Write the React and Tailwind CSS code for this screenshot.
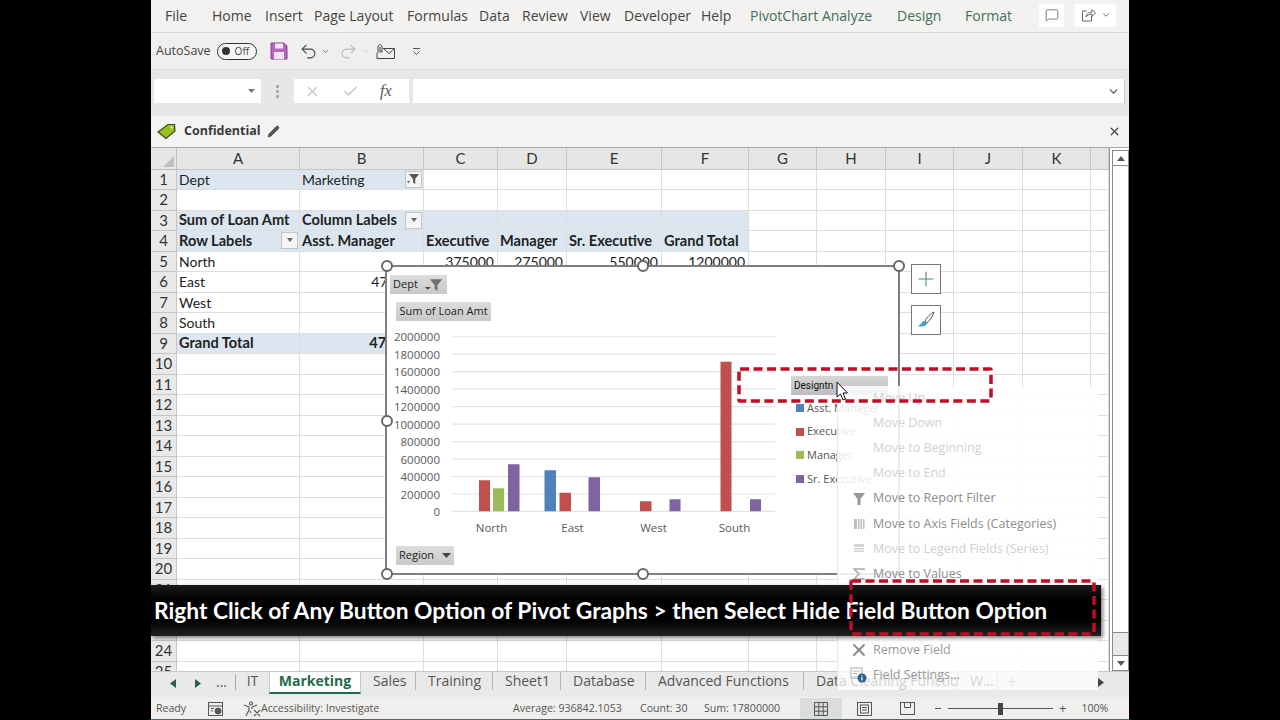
import React from "react";
import { Undo2, Redo2, ChevronDown, X, Check, MessageSquare, Plus, Pencil } from "lucide-react";

const UI = "font-['Open_Sans','Noto_Sans',sans-serif]";
const SHEET = "font-['Lato','Open_Sans',sans-serif]";

const tabs = [
  ["File", "w-[47px]", "text-[#444]"], ["Home", "w-[53px]", "text-[#444]"], ["Insert", "w-[49px]", "text-[#444]"],
  ["Page Layout", "w-[93px]", "text-[#444]"], ["Formulas", "w-[72px]", "text-[#444]"], ["Data", "w-[43px]", "text-[#444]"],
  ["Review", "w-[58px]", "text-[#444]"], ["View", "w-[44px]", "text-[#444]"], ["Developer", "w-[77px]", "text-[#444]"],
  ["Help", "w-[49px]", "text-[#444]"], ["PivotChart Analyze", "w-[147px]", "text-[#3e6f58]"], ["Design", "w-[68px]", "text-[#3e6f58]"],
  ["Format", "w-[66px]", "text-[#3e6f58]"],
];

const cols = ["A", "B", "C", "D", "E", "F", "G", "H", "I", "J", "K", ""];
const hl = "bg-[#dce6f1]";
const rows = {
  1: [["Dept", hl], ["Marketing", hl, "filter"]],
  3: [["Sum of Loan Amt", hl, "b"], ["Column Labels", hl, "bd"], ["", hl], ["", hl], ["", hl], ["", hl]],
  4: [["Row Labels", hl, "bd"], ["Asst. Manager", hl, "b"], ["Executive", hl, "b"], ["Manager", hl, "b"], ["Sr. Executive", hl, "b"], ["Grand Total", hl, "b"]],
  5: [["North"], [""], ["375000", "", "r"], ["275000", "", "r"], ["550000", "", "r"], ["1200000", "", "r"]],
  6: [["East"], ["475000", "", "r"]],
  7: [["West"]],
  8: [["South"]],
  9: [["Grand Total", hl, "b"], ["475000", hl, "br"], ["", hl], ["", hl], ["", hl], ["", hl]],
};

function Drop({ filter }) {
  return (
    <span className="ml-auto -mr-[2px] w-[17px] h-[17px] bg-[#f4f4f4] border border-[#c4c4c4] flex items-center justify-center shrink-0">
      {filter ? (
        <svg width="13" height="12" viewBox="0 0 13 12"><path d="M2 1h10L8.2 6v5L6 9.5V6z" fill="#555" /><path d="M0 8h3l-1.5 2z" fill="#555" /></svg>
      ) : (
        <svg width="8" height="5" viewBox="0 0 8 5"><path d="M1 0h6L4 4z" fill="#666" /></svg>
      )}
    </span>
  );
}

function Row({ n }) {
  const data = rows[n] || [];
  return (
    <>
      <div className="bg-[#e9e9e9] border-b border-r border-[#c6c6c6] text-[#333] text-[15px] flex items-center justify-center h-[20.5px] leading-none">{n}</div>
      {cols.map((c, i) => {
        const d = data[i] || [""];
        const k = d[2] || "";
        const bold = k.startsWith("b");
        const right = k.endsWith("r");
        return (
          <div key={c + i} className={`h-[20.5px] flex items-center overflow-hidden whitespace-nowrap border-b border-r border-[#dedede] pl-[2px] pr-[3px] text-[#222] ${d[1] || ""} ${bold ? "font-bold text-[14.6px]" : "text-[14px]"} ${right ? "justify-end" : ""}`}>
            {d[0]}
            {(k === "bd" || k === "filter") && <Drop filter={k === "filter"} />}
          </div>
        );
      })}
    </>
  );
}

const Handle = ({ className }) => (
  <span className={`absolute w-[12px] h-[12px] rounded-full bg-white border-2 border-[#666] ${className}`} />
);

const bars = [
  [479, 11, 480, "#c0504d"], [493, 11, 488, "#9bbb59"], [508, 11.5, 464, "#8064a2"],
  [544.5, 11.5, 470, "#4f81bd"], [559.5, 11.5, 492.5, "#c0504d"], [588.5, 11.5, 477, "#8064a2"],
  [640, 11.5, 501, "#c0504d"], [669.5, 11, 499, "#8064a2"],
  [720.5, 11, 361.5, "#c0504d"], [750, 11, 499, "#8064a2"],
];
const yLabels = ["2000000", "1800000", "1600000", "1400000", "1200000", "1000000", "800000", "600000", "400000", "200000", "0"];

const ChartBtn = ({ className, children }) => (
  <div className={`flex items-center h-[19px] bg-gradient-to-b from-[#dcdcdc] to-[#c9c9c9] text-[#222] text-[11px] ${className}`}>{children}</div>
);
const Tri = () => <svg width="9" height="5" viewBox="0 0 9 5"><path d="M0 0h9L4.5 5z" fill="#444" /></svg>;

function Chart() {
  return (
    <div className={`absolute left-[385px] top-[265px] w-[515px] h-[310px] bg-white border-2 border-[#7f7f7f] ${UI}`}>
      <div className="flex flex-col h-full">
        <ChartBtn className="ml-[3px] mt-[8px] w-[57px] pl-[3px]">
          Dept
          <svg className="ml-[4px]" width="26" height="14" viewBox="0 0 26 14"><path d="M3 9h6l-3 3z" fill="#444" /><path d="M8 1h13l-5 6v6l-3-1.5V7z" fill="#6f6f6f" /></svg>
        </ChartBtn>
        <ChartBtn className="ml-[9px] mt-[8px] w-[95px] justify-center">Sum of Loan Amt</ChartBtn>
        <div className="flex mt-[7px]">
          <div className="w-[53px] shrink-0 flex flex-col items-end text-[11.5px] text-[#595959]">
            {yLabels.map((l) => <div key={l} className="h-[17.5px] leading-[17.5px]">{l}</div>)}
          </div>
          <svg className="shrink-0 ml-[7px]" width="330" height="192.5" viewBox="447 327.75 330 192.5">
            {yLabels.map((l, i) => (
              <line key={l} x1="452" x2="775" y1={336.5 + i * 17.47} y2={336.5 + i * 17.47} stroke="#e4e4e4" strokeWidth="1.2" />
            ))}
            {bars.map(([x, w, y, f]) => <rect key={x} x={x} y={y} width={w} height={511 - y} fill={f} />)}
          </svg>
          <div className="ml-[14px] mt-[48px] w-[97px] shrink-0">
            <div className="flex items-center h-[19px] pl-[3px] bg-gradient-to-b from-[#d6d6d6] to-[#bdbdbd] font-['Roboto',sans-serif] text-[10px] text-[#111]">Designtn</div>
            <div className="mt-[1px] flex flex-col text-[11px] text-[#555]">
              {[["Asst. Manager", "bg-[#4f81bd]"], ["Executive", "bg-[#c0504d]"], ["Manager", "bg-[#9bbb59]"], ["Sr. Executive", "bg-[#8064a2]"]].map(([t, c]) => (
                <div key={t} className="flex items-center h-[23.7px] pl-[5px] gap-[3px] whitespace-nowrap">
                  <span className={`w-[8px] h-[8px] ${c}`} />{t}
                </div>
              ))}
            </div>
          </div>
        </div>
        <div className="ml-[64px] w-[324px] grid grid-cols-4 text-[11.5px] text-[#595959] text-center -mt-[2px]">
          <span>North</span><span>East</span><span>West</span><span>South</span>
        </div>
        <ChartBtn className="ml-[9px] mt-[10px] w-[58px] pl-[3px] gap-[8px]">Region<Tri /></ChartBtn>
      </div>
      <Handle className="-left-[6px] -top-[7px]" />
      <Handle className="left-[250px] -top-[7px]" />
      <Handle className="-right-[7px] -top-[7px]" />
      <Handle className="-left-[6px] top-[148px]" />
      <Handle className="-left-[6px] -bottom-[7px]" />
      <Handle className="left-[250px] -bottom-[7px]" />
    </div>
  );
}

const menu = [
  ["Move Up", "text-[#cfcfcf]", null],
  ["Move Down", "text-[#d2d2d2]", null],
  ["Move to Beginning", "text-[#d2d2d2]", null],
  ["Move to End", "text-[#d2d2d2]", null],
  ["Move to Report Filter", "text-[#8d8d8d]", "filter"],
  ["Move to Axis Fields (Categories)", "text-[#8d8d8d]", "axis"],
  ["Move to Legend Fields (Series)", "text-[#cfcfcf]", "legend"],
  ["Move to Values", "text-[#8d8d8d]", "sigma"],
  ["", "", null],
  ["", "", null],
  ["Remove Field", "text-[#999]", "x"],
  ["Field Settings...", "text-[#999]", "settings"],
];

function MenuIcon({ k }) {
  if (k === "filter") return <svg width="14" height="14" viewBox="0 0 14 14"><path d="M1 1h12L8.5 7v6h-3V7z" fill="#999" /></svg>;
  if (k === "axis") return <svg width="12" height="12" viewBox="0 0 12 12"><path d="M1 1h3v10H1zM5 1h1.5v10H5zM7.5 1H9v10H7.5zM10 1h1.5v10H10z" fill="#bbb" /></svg>;
  if (k === "legend") return <svg width="12" height="10" viewBox="0 0 12 10"><path d="M1 0h10v3H1zM1 4h10v1.5H1zM1 6.5h10V8H1z" fill="#d5d5d5" /></svg>;
  if (k === "sigma") return <svg width="12" height="12" viewBox="0 0 12 12"><path d="M11 2V1H1l5 5-5 5h10v-1" fill="none" stroke="#aaa" strokeWidth="1.5" /></svg>;
  if (k === "x") return <X size={20} color="#888" strokeWidth={2.2} />;
  if (k === "settings") return (
    <svg width="18" height="16" viewBox="0 0 18 16"><rect x="1" y="1" width="11" height="10" fill="none" stroke="#aaa" /><path d="M3 4h7M3 6.5h4" stroke="#bbb" /><circle cx="12" cy="11" r="4.5" fill="#2f5f93" /><path d="M12 10v3.5M12 8.3v1" stroke="#fff" strokeWidth="1.2" /></svg>
  );
  return null;
}

function ContextMenu() {
  return (
    <div className={`absolute left-[837px] top-[385.5px] w-[261px] h-[304px] bg-gradient-to-b from-white/85 via-white/85 via-[90%] to-white/70 border-l border-[#e8e8e8] ${UI}`}>
      {menu.map(([t, c, k], i) => (
        <div key={i} className={`flex items-center h-[25.2px] text-[12.5px] whitespace-nowrap ${c}`}>
          <span className="w-[35px] pl-[6px] flex items-center justify-center"><MenuIcon k={k} /></span>
          {t}
        </div>
      ))}
    </div>
  );
}

const Dash = ({ className, w, h }) => (
  <svg className={`absolute ${className}`} width={w} height={h} viewBox={`0 0 ${w} ${h}`} fill="none">
    <rect x="2" y="2" width={w - 4} height={h - 4} rx="1" stroke="#c00d27" strokeWidth="3.5" strokeDasharray="9 4.5" />
  </svg>
);

function Ribbon() {
  return (
    <div className={`h-[33px] shrink-0 bg-[#f3f2f0] border-b border-[#d6d6d4] flex items-center pl-[14px] pb-[2px] text-[14px] ${UI}`}>
      {tabs.map(([t, w, c]) => <span key={t} className={`${w} ${c} whitespace-nowrap`}>{t}</span>)}
      <span className="ml-[8px] w-[25px] h-[23px] bg-white flex items-center justify-center">
        <MessageSquare size={14} color="#555" strokeWidth={1.3} />
      </span>
      <span className="ml-[11px] w-[41px] h-[23px] bg-white flex items-center justify-center gap-[5px]">
        <svg width="15" height="14" viewBox="0 0 15 14" fill="none" stroke="#666" strokeWidth="1"><path d="M6 3H1.5v10h9V8" /><path d="M5 9c0-3 3-5 6-5V1.5L14.5 5 11 8.5V6C8.5 6 6.5 7 5 9z" /></svg>
        <ChevronDown size={10} color="#555" />
      </span>
    </div>
  );
}

function Toolbar() {
  return (
    <div className={`h-[36px] shrink-0 bg-[#f1efed] flex items-center pl-[5px] text-[#444] ${UI}`}>
      <span className="text-[12.5px]">AutoSave</span>
      <span className="ml-[6px] w-[40px] h-[17px] rounded-full border border-[#333] flex items-center pl-[4px] gap-[5px] bg-white/40">
        <span className="w-[8px] h-[8px] rounded-full bg-[#333]" />
        <span className="text-[10px]">Off</span>
      </span>
      <svg className="ml-[13px]" width="18" height="18" viewBox="0 0 18 18"><path d="M1 1h13l3 3v13H1z" fill="#b565bd" stroke="#8f3f98" /><rect x="5" y="1.5" width="8" height="5" fill="#f4e6f5" /><rect x="4" y="10" width="10" height="7" fill="#f4e6f5" /></svg>
      <Undo2 className="ml-[11px]" size={19} color="#444" strokeWidth={1.4} />
      <ChevronDown className="ml-[3px]" size={9} color="#555" />
      <Redo2 className="ml-[9px]" size={19} color="#bbb" strokeWidth={1.4} />
      <ChevronDown className="ml-[3px]" size={9} color="#bbb" />
      <svg className="ml-[6px]" width="19" height="15" viewBox="0 0 19 15" fill="none" stroke="#444"><path d="M7 4.5h11.5v10H1V9" /><path d="M8 5l5 4.5L18.5 4.5" /><path d="M2 9V3c0-3 4-3 4 0v5H4V3" /></svg>
      <svg className="ml-[17px]" width="9" height="9" viewBox="0 0 9 9" fill="none" stroke="#555"><path d="M1 1.5h7" /><path d="M1.5 4.5L4.5 7.5 7.5 4.5" /></svg>
    </div>
  );
}

function FormulaBar() {
  return (
    <div className="h-[47px] shrink-0 bg-[#e7e7e7] flex items-center pl-[3px] pr-[4px] pb-[4px] border-t border-[#dcdcdc]">
      <div className="w-[107px] h-[24px] bg-white flex items-center justify-end pr-[6px]"><svg width="7" height="4" viewBox="0 0 7 4"><path d="M0 0h7L3.5 4z" fill="#777" /></svg></div>
      <div className="w-[33px] flex flex-col items-center gap-[2px]">
        <span className="w-[3px] h-[3px] bg-[#aaa]" /><span className="w-[3px] h-[3px] bg-[#aaa]" /><span className="w-[3px] h-[3px] bg-[#aaa]" />
      </div>
      <div className="w-[115px] h-[24px] bg-white flex items-center pl-[10px]">
        <X size={17} color="#c4c4c4" strokeWidth={1.7} />
        <Check className="ml-[21px]" size={17} color="#c4c4c4" strokeWidth={2} />
        <span className="ml-[21px] font-['Liberation_Serif',serif] italic text-[16px] text-[#555]">fx</span>
      </div>
      <div className="ml-[4px] flex-1 h-[24px] bg-white flex items-center justify-end pr-[4px] border-r border-[#c8c8c8]">
        <ChevronDown size={13} color="#555" strokeWidth={2.5} />
      </div>
    </div>
  );
}

function ConfidentialBar() {
  return (
    <div className={`h-[32px] shrink-0 bg-[#f3f3f3] border-b border-[#a8a8a8] flex items-center pl-[6px] pr-[8px] ${UI}`}>
      <svg width="19" height="17" viewBox="0 0 19 17"><path d="M1 9L11 1.5h6.5L18 8 9 15.5z" fill="#97c11f" stroke="#3c4a17" strokeWidth="1.2" /><circle cx="14.5" cy="4.5" r="1" fill="#fff" /></svg>
      <span className="ml-[8px] text-[12.5px] font-bold text-[#3a3a3a]">Confidential</span>
      <Pencil className="ml-[6px]" size={13} color="#444" fill="#555" strokeWidth={1.2} />
      <X className="ml-auto" size={13} color="#444" strokeWidth={2.4} />
    </div>
  );
}

function SheetGrid() {
  return (
    <div className={`flex-1 flex overflow-hidden min-h-0 ${SHEET}`}>
      <div className="w-[958px] shrink-0 overflow-hidden">
        <div className="grid grid-cols-[26px_123px_124px_74px_69px_95px_87px_68px_69px_68px_69px_68px_18px] w-[978px]">
          <div className="h-[21.5px] bg-[#e6e6e6] border-b border-r border-[#bdbdbd] flex items-end justify-end p-[2px]">
            <span className="w-0 h-0 border-l-[11px] border-l-transparent border-b-[11px] border-b-[#c0c0c0]" />
          </div>
          {cols.map((c, i) => (
            <div key={i} className="h-[21.5px] bg-[#e6e6e6] border-b border-r border-[#c6c6c6] text-[15px] text-[#333] flex items-center justify-center">{c}</div>
          ))}
          {Array.from({ length: 25 }, (_, i) => <Row key={i} n={i + 1} />)}
        </div>
      </div>
      <div className="w-[1px] bg-[#999]" />
      <div className="ml-[2px] w-[17px] mt-[2px] border-x border-[#8a8a8a] bg-[#e9e9e9] flex flex-col">
        <div className="h-[16px] shrink-0 bg-white border-y border-[#8a8a8a] flex items-center justify-center"><svg width="8" height="5" viewBox="0 0 8 5"><path d="M0 5h8L4 0z" fill="#555" /></svg></div>
        <div className="h-[467px] shrink-0 bg-white border-b border-[#8a8a8a]" />
        <div className="mt-auto h-[16px] shrink-0 bg-white border-y border-[#8a8a8a] flex items-center justify-center"><svg width="8" height="5" viewBox="0 0 8 5"><path d="M0 0h8L4 5z" fill="#555" /></svg></div>
      </div>
    </div>
  );
}

const sheets = [["Sales", "w-[55px]"], ["Training", "w-[77px]"], ["Sheet1", "w-[68px]"], ["Database", "w-[85px]"], ["Advanced Functions", "w-[158px]"], ["Data Cleaning Functions", "w-[154px]"], ["W...", "w-[40px]"]];

function SheetTabs() {
  return (
    <div className={`h-[26px] shrink-0 bg-[#e9e9e9] border-t border-[#c8c8c8] flex items-start pl-[19px] text-[14px] text-[#555] ${UI}`}>
      <svg className="mt-[7px]" width="6" height="9" viewBox="0 0 6 9"><path d="M6 0v9L0 4.5z" fill="#2f5d50" /></svg>
      <svg className="ml-[19px] mt-[7px]" width="6" height="9" viewBox="0 0 6 9"><path d="M0 0v9l6-4.5z" fill="#2f5d50" /></svg>
      <span className="ml-[15px] w-[19px] leading-[20px]">...</span>
      <span className="w-[1px] h-[16px] mt-[2px] bg-[#aaa]" />
      <span className="w-[33px] text-center leading-[18px]">IT</span>
      <span className="w-[92px] h-[22px] bg-white border-b-2 border-[#1e6b4c] border-x border-x-[#c8c8c8] font-bold text-[#1e6b4c] text-center leading-[18px]">Marketing</span>
      {sheets.map(([s, w]) => (
        <span key={s} className={`${w} shrink-0 pl-[12px] whitespace-nowrap overflow-hidden border-r border-[#b5b5b5] leading-[18px]`}>{s}</span>
      ))}
      <Plus className="ml-[8px] mt-[3px]" size={13} color="#999" />
      <span className="ml-auto mr-[25px] mt-[6px] flex items-center"><svg width="6" height="9" viewBox="0 0 6 9"><path d="M0 0v9l6-4.5z" fill="#444" /></svg></span>
    </div>
  );
}

function StatusBar() {
  return (
    <div className={`h-[23px] shrink-0 bg-[#f0efed] border-b border-[#4d6a5e] pt-[1px] flex items-center pl-[5px] text-[10.6px] text-[#555] ${UI}`}>
      <span className="w-[52px]">Ready</span>
      <svg width="16" height="14" viewBox="0 0 16 14" fill="none" stroke="#555"><rect x="0.5" y="0.5" width="14" height="13" /><path d="M1 4h13M3 6.5h3M3 9h2" /><circle cx="10" cy="9" r="3" fill="#555" /></svg>
      <svg className="ml-[19px]" width="18" height="16" viewBox="0 0 18 16" fill="none" stroke="#555" strokeWidth="1.1"><circle cx="8" cy="2.5" r="1.5" /><path d="M1 4l5 2v3l-3 6M14 4L9 6v2M7 10l1 2M11 9l6 6M17 9l-6 6" /></svg>
      <span className="w-[252px]">Accessibility: Investigate</span>
      <span className="w-[127px] whitespace-nowrap">Average: 936842.1053</span>
      <span className="w-[64px] whitespace-nowrap">Count: 30</span>
      <span className="w-[96px] whitespace-nowrap">Sum: 17800000</span>
      <span className="w-[42px] h-[21px] bg-[#dcdcdc] flex items-center justify-center">
        <svg width="14" height="14" viewBox="0 0 14 14" fill="none" stroke="#555"><path d="M.5.5h13v13H.5zM.5 4.8h13M.5 9.2h13M4.8.5v13M9.2.5v13" /></svg>
      </span>
      <span className="w-[44px] flex justify-center"><svg width="15" height="14" viewBox="0 0 15 14" fill="none" stroke="#555"><rect x=".5" y=".5" width="14" height="13" /><rect x="3.5" y="3" width="8" height="8" /><path d="M5 5.5h5M5 8h5" /></svg></span>
      <span className="w-[42px] flex justify-center"><svg width="15" height="13" viewBox="0 0 15 13" fill="none" stroke="#555"><rect x=".5" y=".5" width="14" height="12" /><path d="M4.5.5v5h6v-5" /></svg></span>
      <span className="ml-[7px] w-[6px] h-[1px] bg-[#555]" />
      <span className="ml-[7px] w-[105px] h-[1px] bg-[#555] flex items-center justify-center">
        <span className="w-[5px] h-[12px] bg-[#444] shrink-0" />
      </span>
      <span className="ml-[6px] text-[13px] leading-none">+</span>
      <span className="ml-[15px]">100%</span>
    </div>
  );
}

export default function App() {
  return (
    <div className="relative w-[1280px] h-[720px] bg-black overflow-hidden">
      <div className="ml-[151px] w-[978px] h-[720px] flex flex-col bg-white">
        <Ribbon />
        <Toolbar />
        <FormulaBar />
        <ConfidentialBar />
        <SheetGrid />
        <SheetTabs />
        <StatusBar />
      </div>
      <Chart />
      <div className="absolute left-[911px] top-[264px] flex flex-col gap-[11px]">
        <span className="w-[30px] h-[30px] bg-white border border-[#777] flex items-center justify-center"><Plus size={24} color="#4d8a70" strokeWidth={1.1} /></span>
        <span className="w-[30px] h-[30px] bg-white border border-[#777] flex items-center justify-center">
          <svg width="20" height="20" viewBox="0 0 20 20"><path d="M18 2c-3 1-7 5-9 9l2 2c3-3 6-7 7-11z" fill="#fff" stroke="#555" /><path d="M8 11c-2 0-2 3-6 5 3 1 8 1 9-3z" fill="#4a9ccc" /></svg>
        </span>
      </div>
      <ContextMenu />
      <div className={`absolute left-[151px] top-[585px] w-[950px] h-[51px] bg-gradient-to-b from-[#1c1c1c] via-[#000] to-[#232323] shadow-[2px_2px_4px_rgba(0,0,0,0.5)] flex items-center pl-[3px] text-white font-bold text-[22.8px] whitespace-nowrap ${SHEET}`}>
        Right Click of Any Button Option of Pivot Graphs &gt; then Select Hide Field Button Option
      </div>
      <Dash className="left-[737px] top-[367px]" w={256} h={36} />
      <Dash className="left-[849px] top-[579px]" w={247} h={57} />
      <svg className="absolute left-[836px] top-[381px]" width="12" height="20" viewBox="0 0 12 20"><path d="M1 1v15l3.5-3 2.5 6 2.5-1-2.5-6h4.5z" fill="#fff" stroke="#111" strokeWidth="1" /></svg>
    </div>
  );
}
